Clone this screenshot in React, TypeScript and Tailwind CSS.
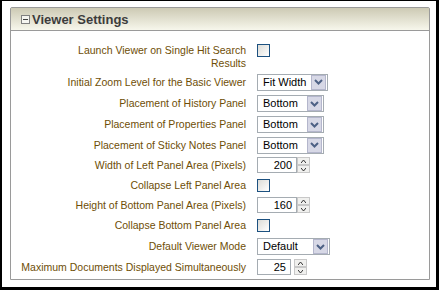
import React from "react";

type Row = {
  label: React.ReactNode;
  kind: "check" | "select" | "spin";
  value?: string;
  width?: string;
  h: string;
};

const rows: Row[] = [
  {
    label: (
      <>
        Launch Viewer on Single Hit Search
        <br />
        Results
      </>
    ),
    kind: "check",
    h: "h-[27px]",
  },
  { label: "Initial Zoom Level for the Basic Viewer", kind: "select", value: "Fit Width", width: "w-[71px]", h: "h-[22px]" },
  { label: "Placement of History Panel", kind: "select", value: "Bottom", width: "w-[67px]", h: "h-[21px]" },
  { label: "Placement of Properties Panel", kind: "select", value: "Bottom", width: "w-[67px]", h: "h-[21px]" },
  { label: "Placement of Sticky Notes Panel", kind: "select", value: "Bottom", width: "w-[67px]", h: "h-[20px]" },
  { label: "Width of Left Panel Area (Pixels)", kind: "spin", value: "200", width: "w-[40px]", h: "h-[20px]" },
  { label: "Collapse Left Panel Area", kind: "check", h: "h-[20px]" },
  { label: "Height of Bottom Panel Area (Pixels)", kind: "spin", value: "160", width: "w-[40px]", h: "h-[20px]" },
  { label: "Collapse Bottom Panel Area", kind: "check", h: "h-[21px]" },
  { label: "Default Viewer Mode", kind: "select", value: "Default", width: "w-[73px]", h: "h-[21px]" },
  { label: "Maximum Documents Displayed Simultaneously", kind: "spin", value: "25", width: "w-[34px]", h: "h-[20px]" },
];

function Checkbox() {
  return (
    <span className="block h-[13px] w-[13px] border border-[#1c5180] bg-gradient-to-br from-[#dcdcd7] to-white" />
  );
}

function Select({ value, width }: { value: string; width: string }) {
  return (
    <div className={`flex h-[17px] items-center border border-[#a5acb2] bg-white p-px ${width}`}>
      <span className="flex-1 whitespace-nowrap pl-[4px] text-[11px] leading-none text-black">{value}</span>
      <span className="flex h-[15px] w-[15px] items-center justify-center border border-[#b4b6cc] bg-[#d7d8e6]">
        <svg width="9" height="6" viewBox="0 0 9 6">
          <path d="M1 1 L4.5 4.5 L8 1" fill="none" stroke="#4d6185" strokeWidth="2" />
        </svg>
      </span>
    </div>
  );
}

function SpinButton({ up }: { up?: boolean }) {
  return (
    <span className="flex h-[8px] w-[13px] items-center justify-center border border-[#c8c8c8] bg-[#f0f0ee]">
      <svg width="5" height="3" viewBox="0 0 5 3">
        <path d={up ? "M0 3 L2.5 0 L5 3" : "M0 0 L2.5 3 L5 0"} fill="none" stroke="#333" strokeWidth="1" />
      </svg>
    </span>
  );
}

function Spin({ value, width, gap }: { value: string; width: string; gap: string }) {
  return (
    <div className={`flex items-center ${gap}`}>
      <div className={`flex h-[16px] items-center justify-end border border-[#a5acb2] bg-white pr-[4px] ${width}`}>
        <span className="text-[11px] leading-none text-black">{value}</span>
      </div>
      <div className="flex flex-col">
        <SpinButton up />
        <SpinButton />
      </div>
    </div>
  );
}

export default function App() {
  return (
    <div
      className="h-[290px] w-[439px] border-t border-r-[3px] border-b-[3px] border-l-2 border-black bg-white pt-[6px] pl-[8px]"
      style={{ fontFamily: '"Liberation Sans", Arial, sans-serif' }}
    >
      <div className="h-[273px] w-[420px] rounded-t-[2px] border border-[#9a9a9a] bg-white">
        <div className="flex h-[23px] items-center gap-[2px] border-b border-[#9a9a9a] bg-gradient-to-b from-[#cdcab4] to-[#f7f7ec] pl-[10px]">
          <span className="flex h-[9px] w-[9px] items-center justify-center border border-[#808080] bg-[#f5f5f0]">
            <span className="block h-px w-[5px] bg-[#404040]" />
          </span>
          <span className="text-[13px] font-bold leading-none text-[#3c3c3c]">Viewer Settings</span>
        </div>
        <div className="flex flex-col pt-[13px]">
          {rows.map((r, i) => (
            <div key={i} className={`flex ${r.h} ${i === 0 ? "items-start" : "items-center"}`}>
              <div className="w-[236px] whitespace-nowrap pr-px text-right text-[10.5px] leading-[13px] text-[#6e4e06]">
                {r.label}
              </div>
              <div className="ml-[10px] flex items-center">
                {r.kind === "check" && <Checkbox />}
                {r.kind === "select" && <Select value={r.value!} width={r.width!} />}
                {r.kind === "spin" && (
                  <Spin value={r.value!} width={r.width!} gap={r.value === "25" ? "gap-[3px]" : "gap-0"} />
                )}
              </div>
            </div>
          ))}
        </div>
      </div>
    </div>
  );
}
